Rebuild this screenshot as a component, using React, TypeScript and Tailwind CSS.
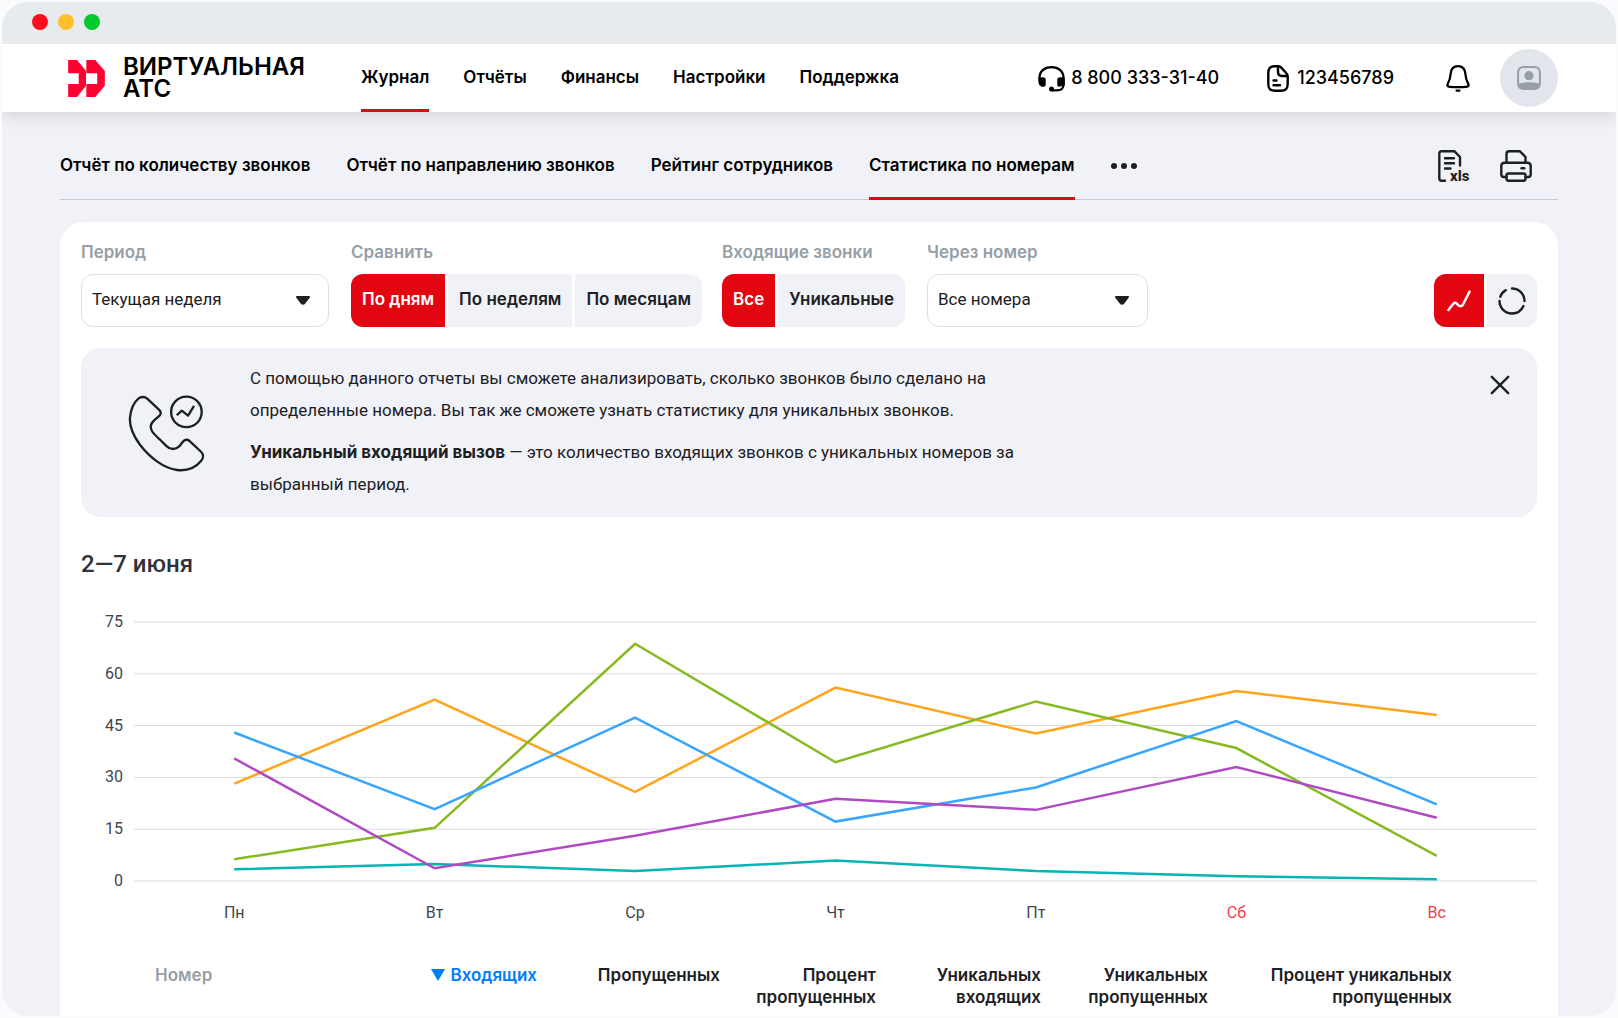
import { useState } from "react";
import clsx from "clsx";

const menu = ["Журнал", "Отчёты", "Финансы", "Настройки", "Поддержка"];

const tabs = [
  "Отчёт по количеству звонков",
  "Отчёт по направлению звонков",
  "Рейтинг сотрудников",
  "Статистика по номерам",
];

const days = ["Пн", "Вт", "Ср", "Чт", "Пт", "Сб", "Вс"];
const ticks = [75, 60, 45, 30, 15, 0];

const series = [
  { color: "#ffa41b", values: [28.2, 52.5, 25.8, 56, 42.7, 55, 48.1] },
  { color: "#87b921", values: [6.3, 15.4, 68.7, 34.4, 52, 38.5, 7.3] },
  { color: "#38a6ff", values: [43, 20.8, 47.3, 17.2, 27.1, 46.3, 22.2] },
  { color: "#04b5b5", values: [3.4, 4.9, 2.9, 5.9, 2.9, 1.4, 0.5] },
  { color: "#ae4bc2", values: [35.5, 3.7, 13.1, 23.8, 20.6, 33, 18.3] },
];

const Logo = () => (
  <svg className="w-[37px] h-[37px]" viewBox="0 0 111 112" fill="#ff0032" aria-hidden="true">
    <path d="M0 0H27L54 33V78L27 112H0V73H32V40H0Z" />
    <path d="M55 0H82L111 33V78L82 112H55V73H88V40H55Z" />
  </svg>
);

const HeadsetIcon = () => (
  <svg className="w-[27px] h-[27px]" viewBox="0 0 28 28" fill="none" aria-hidden="true">
    <path d="M1.5 15V13.5C1.5 6.5 6.5 2.2 14 2.2S26.5 6.5 26.5 13.5V20C26.5 25 24 26.3 19 26.3H14" stroke="#000" strokeWidth="2.4" />
    <path d="M0.3 14C2 12.8 4 12.5 6 13C7.6 13.3 8 14 8 15.6V20C8 21.8 7.4 22.6 5.8 22.6C2 22.6 0.3 20 0.3 16Z" fill="#000" />
    <path d="M27.7 14C26 12.8 24 12.5 22 13C20.4 13.3 20 14 20 15.6V20C20 21.8 20.6 22.6 22.2 22.6L27.7 21Z" fill="#000" />
    <circle cx="14" cy="25" r="2.6" fill="#000" />
  </svg>
);

const DocIcon = () => (
  <svg className="w-[22px] h-[27px]" viewBox="0 0 22 27" fill="none" stroke="#000" strokeWidth="2.4" strokeLinecap="round" strokeLinejoin="round" aria-hidden="true">
    <path d="M12 1.3H8.5C3 1.3 1.3 3 1.3 8.5V18.5C1.3 24 3 25.7 8.5 25.7H13.5C19 25.7 20.7 24 20.7 18.5V11.5C20.7 10 20.3 9.2 19.4 8.3L14 2.4C13.4 1.7 12.8 1.3 12 1.3Z" />
    <path d="M11 2V6.5C11 9.8 12 11 15 11H20" />
    <path d="M6.5 15.5H9.5M6.5 20.2H13" />
  </svg>
);

const BellIcon = () => (
  <svg className="w-6 h-[27px]" viewBox="0 0 24 27" fill="none" stroke="#000" strokeWidth="2.3" strokeLinecap="round" strokeLinejoin="round" aria-hidden="true">
    <path d="M12 1.2C7.3 1.2 5 4 4.6 9C4.3 13.5 3.6 15.5 2 18.3C0.9 20.4 1.4 21.6 3.8 21.8C9 22.3 15 22.3 20.2 21.8C22.6 21.6 23.1 20.4 22 18.3C20.4 15.5 19.7 13.5 19.4 9C19 4 16.7 1.2 12 1.2Z" />
    <path d="M10.6 25.7H13.4" />
  </svg>
);

const UserIcon = () => (
  <svg className="w-6 h-6" viewBox="0 0 24 24" aria-hidden="true">
    <path d="M7.5 1.1H16.5C21.5 1.1 22.9 2.5 22.9 7.5V16.5C22.9 21.5 21.5 22.9 16.5 22.9H7.5C2.5 22.9 1.1 21.5 1.1 16.5V7.5C1.1 2.5 2.5 1.1 7.5 1.1Z" fill="none" stroke="#969fa8" strokeWidth="2" />
    <circle cx="12" cy="9.7" r="4.6" fill="#969fa8" />
    <path d="M2 17.5C8 15.8 16 15.8 22 17.5C22 21.5 20.5 23 16.5 23H7.5C3.5 23 2 21.5 2 17.5Z" fill="#969fa8" />
  </svg>
);

const XlsIcon = () => (
  <svg className="w-8 h-8 overflow-visible" viewBox="0 0 32 32" fill="none" aria-hidden="true">
    <path d="M7 30.7H3.5C2 30.7 1.3 30 1.3 28.5V3.5C1.3 2 2 1.3 3.5 1.3H16.5L22 7V15.5" stroke="#1d2023" strokeWidth="2.4" strokeLinecap="round" strokeLinejoin="round" />
    <path d="M7 8.3H16M7 13.3H16M7 18.5H12.5" stroke="#1d2023" strokeWidth="2.4" strokeLinecap="round" />
    <text x="12" y="31" fill="#1d2023" fontFamily="Roboto, sans-serif" fontSize="15" fontWeight="800">xls</text>
  </svg>
);

const PrinterIcon = () => (
  <svg className="w-8 h-8" viewBox="0 0 32 32" fill="none" stroke="#1d2023" strokeWidth="2.4" strokeLinecap="round" strokeLinejoin="round" aria-hidden="true">
    <path d="M6.5 12.5V4C6.5 2.2 7.3 1.3 9 1.3H20L25.5 7V12.5" />
    <path d="M6.5 27H4C2 27 1.3 26.3 1.3 24.3V16C1.3 13.6 2.2 12.7 4.6 12.7H27.4C29.8 12.7 30.7 13.6 30.7 16V24.3C30.7 26.3 30 27 28 27H25.5" />
    <path d="M8.5 23.5H23.5C25 23.5 25.5 24 25.5 25.5V28.5C25.5 30 25 30.7 23.5 30.7H8.5C7 30.7 6.5 30 6.5 28.5V25.5C6.5 24 7 23.5 8.5 23.5Z" />
    <path d="M21.5 18.3H24.3" />
  </svg>
);

const CallStatsIcon = () => (
  <svg className="w-[77px] h-[77px]" viewBox="174 162 232 232" fill="none" stroke="#1d2023" strokeWidth="7" strokeLinejoin="round" aria-hidden="true">
    <path d="M206 172C212 167 224 166 232 173L268 207C274 213 274 219 269 224L252 239C241 249 240 260 247 272C252 280 260 287 270 296L290 316C302 328 318 327 328 317L340 302C345 296 353 295 359 300L394 333C402 341 402 352 394 361C376 383 350 391 322 388C282 383 240 351 210 312C190 284 178 252 180 230C182 208 192 184 206 172Z" />
    <circle cx="350" cy="213" r="46" />
    <path d="M321 223L336 209L355 224L373 195" />
  </svg>
);

const LineChartIcon = () => (
  <svg className="w-6 h-[22px]" viewBox="0 0 24 22" fill="none" stroke="#fff" strokeWidth="2.4" strokeLinecap="round" strokeLinejoin="round" aria-hidden="true">
    <path d="M1.4 20L6.3 13.7C7.2 12.6 8.3 12.5 9.4 13.4L11.8 15.5C13.3 16.7 15.3 16.2 16 14.5L22.6 1.6" />
  </svg>
);

const RingIcon = () => (
  <svg className="w-7 h-7" viewBox="0 0 28 28" fill="none" aria-hidden="true">
    <circle cx="14" cy="14" r="12.5" stroke="#1d2023" strokeWidth="2.4" strokeLinecap="round" pathLength="360" strokeDasharray="90 24 156 20 40 30" transform="rotate(-90 14 14)" />
  </svg>
);

type SelectProps = { id: string; label: string; options: string[]; className: string };

const SelectField = ({ id, label, options, className }: SelectProps) => (
  <div className={clsx("flex flex-col gap-[10px]", className)}>
    <label htmlFor={id} className="text-[17px] leading-6 font-semibold text-[#969fa8]">{label}</label>
    <div className="relative">
      <select id={id} className="w-full h-[53px] pl-[10px] pr-10 pb-px appearance-none bg-white border border-[#dee0e8] rounded-xl font-[Roboto,sans-serif] text-[17px] text-[#1d2023]">
        {options.map((o) => <option key={o}>{o}</option>)}
      </select>
      <svg className="absolute right-[19px] top-[22px] w-[14px] h-[9px] pointer-events-none" viewBox="0 0 14 9" fill="#1d2023" aria-hidden="true">
        <path d="M1.2 0H12.8C14 0 14.4 1 13.5 2L9.3 7.4C8 9.1 6 9.1 4.7 7.4L0.5 2C-0.4 1 0 0 1.2 0Z" />
      </svg>
    </div>
  </div>
);

type SegmentedProps = { label: string; options: string[] };

const Segmented = ({ label, options }: SegmentedProps) => {
  const [active, setActive] = useState(options[0]);

  return (
    <div role="group" aria-label={label} className="flex flex-col gap-[10px]">
      <span className="text-[17px] leading-6 font-semibold text-[#969fa8]">{label}</span>
      <div className="flex gap-[3px] rounded-xl overflow-hidden">
        {options.map((o) => (
          <button
            key={o}
            type="button"
            onClick={() => setActive(o)}
            className={clsx(
              "h-[53px] px-[11px] pb-px text-[17px] font-semibold whitespace-nowrap",
              o === active ? "bg-[#e30611] text-white" : "bg-[#f1f2f7] text-[#1d2023]"
            )}
          >
            {o}
          </button>
        ))}
      </div>
    </div>
  );
};

const Header = () => (
  <header className="relative flex items-center justify-between h-[68px] px-[58px] bg-white shadow-[0_4px_16px_rgba(0,0,0,0.12)]">
    <div className="flex h-full">
      <a href="#" className="flex items-center gap-[18px] pl-2">
        <Logo />
        <span className="text-2xl leading-[22px] font-semibold">
          ВИРТУАЛЬНАЯ<br />АТС
        </span>
      </a>
      <nav className="flex gap-[34px] ml-14">
        {menu.map((m, i) => (
          <a
            key={m}
            href="#"
            className={clsx(
              "flex items-center pt-[2px] text-[17px] font-semibold border-b-[3px]",
              i === 0 ? "border-[#e30611]" : "border-transparent"
            )}
          >
            {m}
          </a>
        ))}
      </nav>
    </div>
    <div className="flex items-center text-lg font-medium">
      <a href="#" className="flex items-center gap-[6px]">
        <HeadsetIcon />
        8 800 333-31-40
      </a>
      <a href="#" className="flex items-center gap-2 ml-12">
        <DocIcon />
        123456789
      </a>
      <button type="button" aria-label="Уведомления" className="ml-[52px]"><BellIcon /></button>
      <button type="button" aria-label="Профиль" className="flex items-center justify-center w-[58px] h-[58px] ml-[30px] rounded-full bg-[#e2e5eb]">
        <UserIcon />
      </button>
    </div>
  </header>
);

const Tabs = () => (
  <div className="flex items-end justify-between h-[88px] border-b border-[#c6c9d6]">
    <nav className="flex gap-9 -mb-px">
      {tabs.map((t, i) => (
        <a
          key={t}
          href="#"
          className={clsx(
            "pb-5 text-[17px] leading-6 font-semibold border-b-[3px]",
            i === 3 ? "border-[#e30611]" : "border-transparent"
          )}
        >
          {t}
        </a>
      ))}
      <button type="button" aria-label="Ещё" className="flex items-center gap-1 h-[26px]">
        <span className="w-[6px] h-[6px] rounded-full bg-[#1d2023]" />
        <span className="w-[6px] h-[6px] rounded-full bg-[#1d2023]" />
        <span className="w-[6px] h-[6px] rounded-full bg-[#1d2023]" />
      </button>
    </nav>
    <div className="flex gap-[30px] pb-[17px] pr-[26px]">
      <button type="button" aria-label="Скачать xls"><XlsIcon /></button>
      <button type="button" aria-label="Печать"><PrinterIcon /></button>
    </div>
  </div>
);

const Info = () => (
  <div className="flex items-start mt-[21px] pt-[14px] pb-[17px] px-[27px] rounded-[20px] bg-[#f1f2f7] text-[#1d2023]">
    <div className="mt-[33px] ml-5"><CallStatsIcon /></div>
    <div className="flex-1 ml-[45px] font-[Roboto,sans-serif] text-[17px] leading-8">
      <p className="max-w-[800px]">
        С помощью данного отчеты вы сможете анализировать, сколько звонков было сделано на определенные номера. Вы так же сможете узнать статистику для уникальных звонков.
      </p>
      <p className="max-w-[800px] mt-[10px]">
        <b className="font-[Inter,sans-serif]">Уникальный входящий вызов</b> — это количество входящих звонков с уникальных номеров за выбранный период.
      </p>
    </div>
    <button type="button" aria-label="Закрыть" className="mt-[13px]">
      <svg className="w-5 h-5" viewBox="0 0 20 20" stroke="#1d2023" strokeWidth="2.4" strokeLinecap="round" aria-hidden="true">
        <path d="M1.8 1.8L18.2 18.2M18.2 1.8L1.8 18.2" />
      </svg>
    </button>
  </div>
);

const Chart = () => (
  <div className="mt-8 font-[Roboto,sans-serif] text-base text-[#42464d]">
    <div className="flex gap-[11px]">
      <div className="flex flex-col justify-between w-[42px] h-[279px] text-right leading-5">
        {ticks.map((t) => <span key={t}>{t}</span>)}
      </div>
      {/* 100 units per day across, one unit per call down */}
      <svg className="flex-1 min-w-0 h-[259px] my-[10px] overflow-visible" viewBox="0 0 700 75" preserveAspectRatio="none" fill="none" role="img" aria-label="Звонки по дням">
        {ticks.map((t) => (
          <line key={t} x1="0" x2="700" y1={75 - t} y2={75 - t} stroke="#dadce3" strokeWidth="1" vectorEffect="non-scaling-stroke" />
        ))}
        {series.map((s) => (
          <polyline
            key={s.color}
            points={s.values.map((v, i) => `${50 + i * 100},${75 - v}`).join(" ")}
            stroke={s.color}
            strokeWidth="2.5"
            vectorEffect="non-scaling-stroke"
          />
        ))}
      </svg>
    </div>
    <div className="grid grid-cols-7 mt-[10px] ml-[53px] text-center leading-6">
      {days.map((d, i) => (
        <span key={d} className={clsx(i > 4 && "text-[#fa394b]")}>{d}</span>
      ))}
    </div>
  </div>
);

const NumbersTable = () => (
  <div className="mt-[39px] pl-[74px] pr-[85px]">
    <table className="w-full table-fixed text-[17px] leading-[22px] text-right text-[#1d2023]">
      <thead>
        <tr className="align-top">
          <th className="w-[16%] text-left font-semibold text-[#969fa8]">Номер</th>
          <th className="font-semibold text-[#007cff]">
            <button type="button" className="inline-flex items-center gap-[5px]">
              <svg className="w-[14px] h-3" viewBox="0 0 14 12" fill="#007cff" aria-hidden="true"><path d="M0 0H14L7 12Z" /></svg>
              Входящих
            </button>
          </th>
          <th className="w-[183px] font-semibold">Пропущенных</th>
          <th className="w-[156px] font-semibold">Процент<br />пропущенных</th>
          <th className="w-[165px] font-semibold">Уникальных<br />входящих</th>
          <th className="w-[167px] font-semibold">Уникальных<br />пропущенных</th>
          <th className="w-[244px] font-semibold">Процент уникальных<br />пропущенных</th>
        </tr>
      </thead>
    </table>
  </div>
);

const App = () => {
  const [view, setView] = useState("line");

  return (
    <div className="flex flex-col min-h-screen p-[2px] bg-[#fafbfc] font-[Inter,sans-serif] text-black">
      <div className="flex flex-col flex-1 rounded-[26px] overflow-hidden bg-[#f1f2f7]">
        <div className="relative z-10 flex items-center gap-[10px] h-[42px] px-[30px] pb-[2px] bg-[#e8ebee]">
          <span className="w-4 h-4 rounded-full bg-[#ff0a1f]" />
          <span className="w-4 h-4 rounded-full bg-[#ffc02b]" />
          <span className="w-4 h-4 rounded-full bg-[#00ca2c]" />
        </div>
        <Header />
        <main className="flex flex-col flex-1 px-[58px]">
          <Tabs />
          <section className="flex-1 mt-[22px] px-[21px] pt-[18px] pb-2 rounded-t-[24px] bg-white">
            <div className="flex items-end">
              <SelectField id="period" label="Период" options={["Текущая неделя", "Прошлая неделя"]} className="w-[248px] mr-[22px]" />
              <div className="flex gap-5">
                <Segmented label="Сравнить" options={["По дням", "По неделям", "По месяцам"]} />
                <Segmented label="Входящие звонки" options={["Все", "Уникальные"]} />
              </div>
              <SelectField id="number" label="Через номер" options={["Все номера"]} className="w-[221px] ml-[22px]" />
              <div className="flex gap-[3px] ml-auto rounded-xl overflow-hidden">
                <button
                  type="button"
                  aria-label="Линейный график"
                  onClick={() => setView("line")}
                  className={clsx("flex items-center justify-center w-[50px] h-[53px]", view === "line" ? "bg-[#e30611]" : "bg-[#969fa8]")}
                >
                  <LineChartIcon />
                </button>
                <button
                  type="button"
                  aria-label="Круговая диаграмма"
                  onClick={() => setView("ring")}
                  className={clsx("flex items-center justify-center w-[50px] h-[53px]", view === "ring" ? "bg-[#e30611]" : "bg-[#f1f2f7]")}
                >
                  <RingIcon />
                </button>
              </div>
            </div>
            <Info />
            <h2 className="mt-[31px] font-[Roboto,sans-serif] text-2xl leading-8 font-medium text-[#2f3237]">2—7 июня</h2>
            <Chart />
            <NumbersTable />
          </section>
        </main>
      </div>
    </div>
  );
};

export default App;
